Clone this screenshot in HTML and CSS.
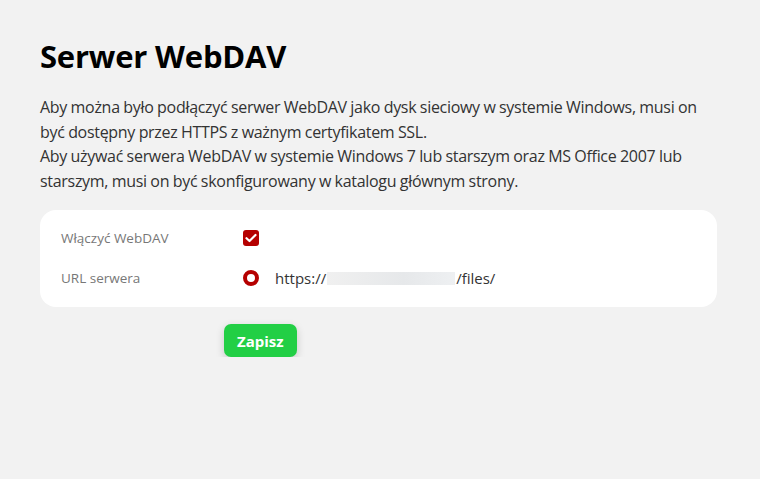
FILE: index.html
```html
<!DOCTYPE html>
<html lang="pl">
<head>
<meta charset="utf-8">
<title>Serwer WebDAV</title>
<link rel="stylesheet" href="styles.css">
</head>
<body>
<main class="page">
  <h1 class="title">Serwer WebDAV</h1>
  <p class="intro">Aby można było podłączyć serwer WebDAV jako dysk sieciowy w systemie Windows, musi on<br>być dostępny przez HTTPS z ważnym certyfikatem SSL.<br>Aby używać serwera WebDAV w systemie Windows 7 lub starszym oraz MS Office 2007 lub<br>starszym, musi on być skonfigurowany w katalogu głównym strony.</p>
  <section class="card">
    <div class="row">
      <span class="label">Włączyć WebDAV</span>
      <span class="checkbox">
        <svg width="12" height="10" viewBox="0 0 12 10"><path d="M1.5 5.2 L4.5 8 L10.5 2" fill="none" stroke="#fff" stroke-width="2.2" stroke-linecap="round" stroke-linejoin="round"/></svg>
      </span>
    </div>
    <div class="row">
      <span class="label">URL serwera</span>
      <span class="radio"></span>
      <span class="url">https://<span class="blur"></span>/files/</span>
    </div>
  </section>
  <div class="actions">
    <button class="save">Zapisz</button>
  </div>
</main>
</body>
</html>
```
FILE: styles.css
```css
html, body {
  margin: 0;
  padding: 0;
  background: #f2f2f2;
}
body {
  font-family: "Open Sans", "Noto Sans", sans-serif;
  color: #333;
}
.page {
  padding: 36px 43px 0 40px;
}
.title {
  margin: 0;
  font-size: 31px;
  font-weight: 700;
  color: #000;
  line-height: 40px;
  letter-spacing: -0.2px;
}
.intro {
  margin: 19px 0 0;
  font-size: 16px;
  line-height: 24.5px;
  color: #333;
  letter-spacing: -0.3px;
  word-spacing: -0.3px;
  white-space: nowrap;
}
.card {
  margin-top: 17px;
  background: #fff;
  border-radius: 16px;
  padding: 18px 21px 19px;
  display: flex;
  flex-direction: column;
  gap: 20px;
}
.row {
  display: flex;
  align-items: center;
  height: 20px;
}
.label {
  width: 182px;
  font-size: 13.5px;
  color: #777;
  letter-spacing: 0;
}
.checkbox {
  width: 16px;
  height: 16px;
  border-radius: 3px;
  background: #b50000;
  display: flex;
  align-items: center;
  justify-content: center;
}
.radio {
  width: 8px;
  height: 8px;
  border-radius: 50%;
  border: 4px solid #b50000;
  background: #fff;
}
.url {
  margin-left: 16px;
  font-size: 15px;
  color: #333;
  display: flex;
  align-items: center;
  letter-spacing: 0;
}
.blur {
  display: inline-block;
  width: 128px;
  height: 13px;
  background: linear-gradient(90deg, #f0f0f0, #e6e8ea 60%, #eef0f2);
  margin: 0 1px;
}
.actions {
  display: flex;
  padding-left: 184px;
  margin-top: 17px;
}
.save {
  font-family: inherit;
  font-size: 15px;
  font-weight: 700;
  color: #fff;
  background: #22cf45;
  border: none;
  border-radius: 7px;
  height: 33px;
  padding: 0 13px;
  box-shadow: 0 3px 8px rgba(0,0,0,0.18);
  cursor: pointer;
}
```
